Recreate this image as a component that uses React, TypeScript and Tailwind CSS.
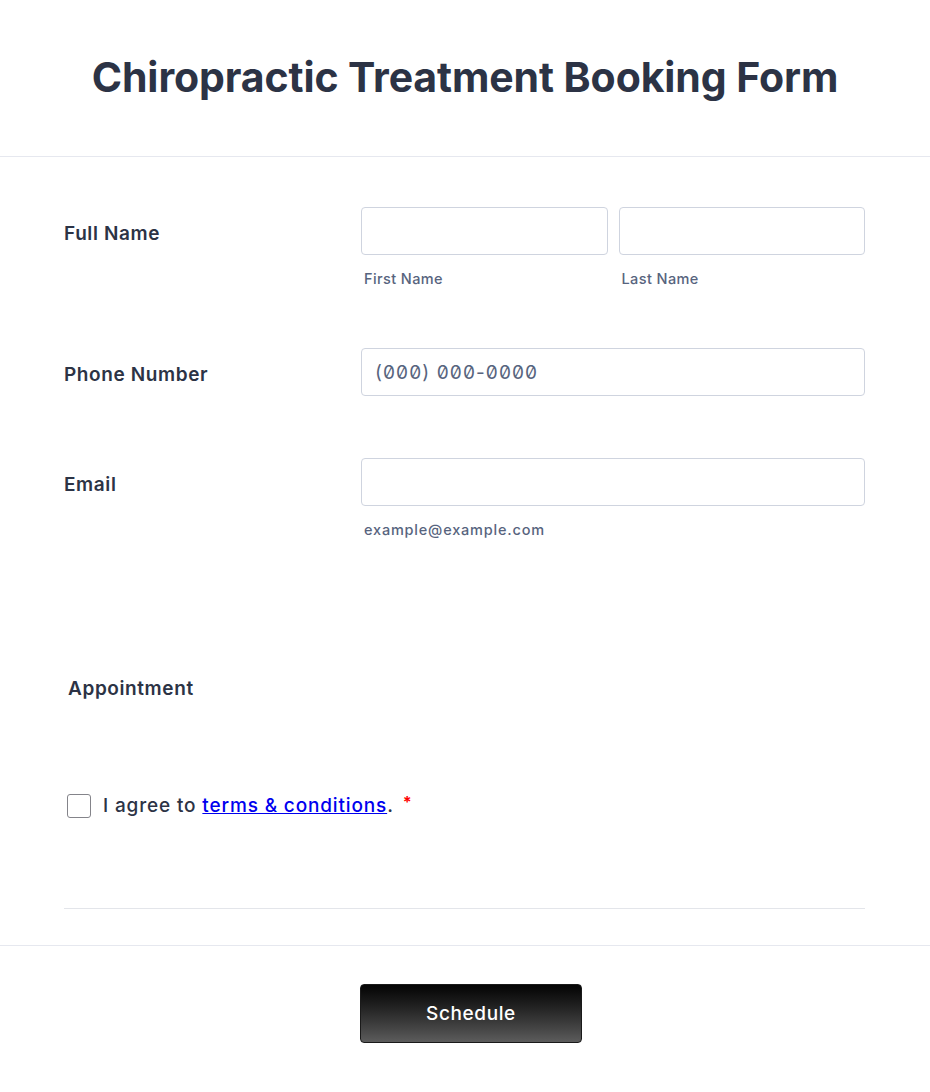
import React from "react";

const font = { fontFamily: "Inter, 'Noto Sans', sans-serif" };

function Input({ className = "", placeholder = "" }: { className?: string; placeholder?: string }) {
  return (
    <div
      className={`h-[48px] rounded-[4px] border border-[#cfd4df] bg-white flex items-center px-[13px] ${className}`}
    >
      {placeholder ? (
        <span className="text-[19px] text-[#57647e] [font-feature-settings:'zero'] tracking-[1.1px] pt-[2px]">{placeholder}</span>
      ) : null}
    </div>
  );
}

export default function App() {
  return (
    <div className="w-[930px] h-[1092px] bg-white text-[#2c3345]" style={font}>
      <div className="h-[157px] flex items-center justify-center border-b border-[#e6e8ef]">
        <h1 className="text-[41px] font-bold tracking-[-0.1px] leading-none pb-[1px]">
          Chiropractic Treatment Booking Form
        </h1>
      </div>

      <div className="pl-[64px] pr-[65px] pb-[36px]">
        {/* Full name */}
        <div className="mt-[50px] flex">
          <div className="w-[297px] pt-[15px] text-[19px] leading-[24px] font-semibold tracking-[0.6px]">Full Name</div>
          <div className="flex-1 flex gap-[11px]">
            <div className="flex-1 flex flex-col">
              <Input />
              <div className="mt-[14px] pl-[3px] text-[14.5px] leading-[20px] font-medium text-[#57647e] tracking-[0.4px]">First Name</div>
            </div>
            <div className="flex-1 flex flex-col">
              <Input />
              <div className="mt-[14px] pl-[3px] text-[14.5px] leading-[20px] font-medium text-[#57647e] tracking-[0.4px]">Last Name</div>
            </div>
          </div>
        </div>

        {/* Phone */}
        <div className="mt-[59px] flex">
          <div className="w-[297px] pt-[15px] text-[19px] leading-[24px] font-semibold tracking-[0.6px]">Phone Number</div>
          <div className="flex-1">
            <Input placeholder="(000) 000-0000" />
          </div>
        </div>

        {/* Email */}
        <div className="mt-[62px] flex">
          <div className="w-[297px] pt-[15px] text-[19px] leading-[24px] font-semibold tracking-[0.6px]">Email</div>
          <div className="flex-1 flex flex-col">
            <Input />
            <div className="mt-[14px] pl-[3px] text-[14.5px] leading-[20px] font-medium text-[#57647e] tracking-[0.8px]">
              example@example.com
            </div>
          </div>
        </div>

        {/* Appointment */}
        <div className="mt-[137px] pl-[4px] text-[19px] leading-[24px] font-semibold tracking-[0.6px]">Appointment</div>

        {/* Terms */}
        <div className="mt-[92px] pl-[3px] flex items-center gap-[12px]">
          <div className="w-[24px] h-[24px] rounded-[3px] border-[1.5px] border-[#84848a] bg-white" />
          <div className="text-[19px] leading-[24px] font-medium tracking-[0.85px] pt-[1px]">
            I agree to{" "}
            <a href="#" className="text-[#0000ee] underline">
              terms &amp; conditions
            </a>
            .<span className="ml-[9px] text-[#ff0000] font-bold align-top text-[16px] relative top-[-4px]">*</span>
          </div>
        </div>

        <div className="mt-[90px] border-t border-[#e3e5ea]" />
      </div>

      <div className="border-t border-[#e6e8ef] pt-[38px] flex justify-center pl-[12px]">
        <button className="w-[222px] h-[59px] rounded-[4px] border border-[#1a1a1a] bg-gradient-to-b from-[#050505] to-[#5c5c5c] text-white text-[19px] font-medium tracking-[0.6px] pt-[1px]">
          Schedule
        </button>
      </div>
    </div>
  );
}
